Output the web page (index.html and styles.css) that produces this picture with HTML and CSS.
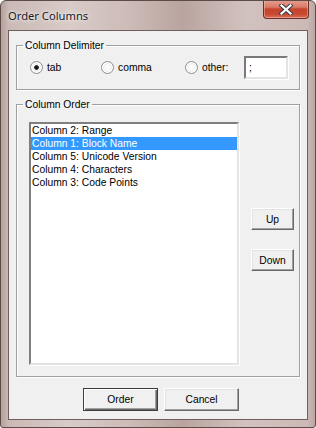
FILE: index.html
```html
<!DOCTYPE html>
<html>
<head>
<meta charset="utf-8">
<title>Order Columns</title>
<link rel="stylesheet" href="styles.css">
</head>
<body>
<div class="window">
  <div class="titlebar">
    <span class="title">Order Columns</span>
    <button class="close" aria-label="Close">
      <svg width="14" height="11" viewBox="0 0 14 11">
        <path d="M2.5 1.5 L11.5 9.5 M11.5 1.5 L2.5 9.5" stroke="#3b3b4a" stroke-width="4.2" stroke-linecap="square" fill="none"/>
        <path d="M2.5 1.5 L11.5 9.5 M11.5 1.5 L2.5 9.5" stroke="#ffffff" stroke-width="2.2" stroke-linecap="square" fill="none"/>
      </svg>
    </button>
  </div>
  <div class="client">
    <fieldset class="group delim">
      <legend>Column Delimiter</legend>
      <div class="radios">
        <label class="opt opt-tab"><input type="radio" name="delim" checked><span>tab</span></label>
        <label class="opt opt-comma"><input type="radio" name="delim"><span>comma</span></label>
        <label class="opt opt-other"><input type="radio" name="delim"><span>other:</span></label>
        <div class="textbox">;</div>
      </div>
    </fieldset>
    <fieldset class="group order">
      <legend>Column Order</legend>
      <div class="order-body">
        <ul class="listbox">
          <li>Column 2: Range</li>
          <li class="selected">Column 1: Block Name</li>
          <li>Column 5: Unicode Version</li>
          <li>Column 4: Characters</li>
          <li>Column 3: Code Points</li>
        </ul>
        <div class="side-buttons">
          <button class="btn small">Up</button>
          <button class="btn small">Down</button>
        </div>
      </div>
    </fieldset>
    <div class="footer">
      <button class="btn wide default">Order</button>
      <button class="btn wide">Cancel</button>
    </div>
  </div>
</div>
</body>
</html>
```
FILE: styles.css
```css
* { box-sizing: border-box; }

html, body {
  margin: 0;
  padding: 0;
  background: #ffffff;
}

body {
  font-family: Tahoma, "Liberation Sans", Arial, sans-serif;
  font-size: 10.3px;
  color: #000;
}

.window {
  width: 316px;
  height: 428px;
  border: 1px solid #5d4b48;
  border-radius: 6px 6px 3px 3px;
  background:
    linear-gradient(to right, rgba(120, 95, 90, 0.25) 0px, rgba(120, 95, 90, 0) 8px, rgba(0,0,0,0) 306px, rgba(120, 95, 90, 0.2) 314px),
    linear-gradient(to right, #c9b7b3 0%, #d8cbc8 22%, #cdbcb8 40%, #b9a49f 58%, #d2c2bf 78%, #cbb8b4 100%);
  display: flex;
  flex-direction: column;
  overflow: hidden;
}

.titlebar {
  height: 29px;
  display: flex;
  align-items: flex-start;
  justify-content: space-between;
  padding-left: 7px;
  padding-right: 6px;
}

.title {
  font-family: "Segoe UI", "Noto Sans", "Open Sans", sans-serif;
  font-size: 11.2px;
  line-height: 16px;
  margin-top: 7px;
  color: #1a1a2a;
  text-shadow: 0 0 6px rgba(255,255,255,0.9), 0 0 3px rgba(255,255,255,0.7);
}

.close {
  width: 46px;
  height: 19px;
  margin-top: -1px;
  padding: 0;
  border: 1px solid #6b3128;
  border-top: none;
  border-radius: 0 0 4px 4px;
  background: linear-gradient(to bottom, #e4a193 0%, #d97a66 40%, #c4432c 50%, #c84a32 80%, #d9745c 100%);
  box-shadow: inset 0 0 0 1px rgba(255, 200, 190, 0.45);
  display: flex;
  align-items: center;
  justify-content: center;
}

.close svg { display: block; }

.client {
  margin: 0 7px;
  height: 390px;
  background: #f0f0f0;
  border: 1px solid #6e5f5c;
  display: flex;
  flex-direction: column;
}

.group {
  margin: 0 7px;
  padding: 0;
  border: 1px solid #a0a0a0;
  box-shadow: 1px 1px 0 #ffffff, inset 1px 1px 0 #ffffff;
  min-width: 0;
}

.group legend {
  margin-left: 6px;
  padding: 0 2px;
  font-size: 10.3px;
  line-height: 13px;
  height: 13px;
}

.delim { margin-top: 8px; }
.order { margin-top: 8px; }

.radios {
  height: 37px;
  padding-top: 4px;
  padding-left: 13px;
  display: flex;
  align-items: flex-start;
}

.opt {
  display: flex;
  align-items: center;
  height: 23px;
  gap: 4px;
}

.opt-tab { width: 71px; }
.opt-comma { width: 84px; }
.opt-other { width: 59px; }

.opt input {
  appearance: none;
  -webkit-appearance: none;
  margin: 0;
  width: 13px;
  height: 13px;
  border-radius: 50%;
  border: 1px solid #8e8f8f;
  background: radial-gradient(circle at 50% 50%, #ffffff 0%, #f4f4f4 45%, #d8d8d8 100%);
  box-shadow: inset 0 0 0 1px #ffffff;
  flex: none;
}

.opt input:checked {
  background:
    radial-gradient(circle at 50% 50%, #111 0, #222 2px, rgba(0,0,0,0) 2.6px),
    radial-gradient(circle at 50% 50%, #ffffff 0%, #f4f4f4 45%, #d8d8d8 100%);
}

.opt span {
  line-height: 13px;
}

.textbox {
  width: 44px;
  height: 23px;
  background: #fff;
  border: 2px solid;
  border-color: #7a7a7a #e3e3e3 #e3e3e3 #7a7a7a;
  box-shadow: 1px 1px 0 #ffffff;
  padding: 3px 0 0 3px;
  line-height: 13px;
}

.order-body {
  height: 265px;
  padding: 11px 0 11px 12px;
  display: flex;
  align-items: flex-start;
  gap: 12px;
}

.listbox {
  list-style: none;
  margin: 0;
  width: 210px;
  height: 243px;
  background: #ffffff;
  border: 2px solid;
  border-color: #7f7f7f #e3e3e3 #e3e3e3 #7f7f7f;
  box-shadow: 1px 1px 0 #fff;
  padding: 0;
  flex: none;
}

.listbox li {
  height: 13px;
  line-height: 13px;
  padding-left: 1px;
  white-space: nowrap;
  overflow: hidden;
}

.listbox li.selected {
  background: #3399ff;
  color: #ffffff;
}

.side-buttons {
  display: flex;
  flex-direction: column;
  gap: 19px;
  padding-top: 86px;
}

.btn {
  font-family: Tahoma, "Liberation Sans", Arial, sans-serif;
  font-size: 10.3px;
  color: #000;
  background: #f0f0f0;
  padding: 0;
  border: 1px solid;
  border-color: #ffffff #696969 #696969 #ffffff;
  box-shadow: inset -1px -1px 0 #a0a0a0, inset 1px 1px 0 #e3e3e3;
  border-radius: 0;
}

.btn.small {
  width: 43px;
  height: 22px;
}

.btn.wide {
  width: 75px;
  height: 23px;
}

.btn.default {
  border-color: #3c3c3c;
  box-shadow: inset 1px 1px 0 #ffffff, inset -1px -1px 0 #696969, inset -2px -2px 0 #a0a0a0;
}

.footer {
  display: flex;
  gap: 6px;
  padding-left: 74px;
  margin-top: 11px;
}
```
